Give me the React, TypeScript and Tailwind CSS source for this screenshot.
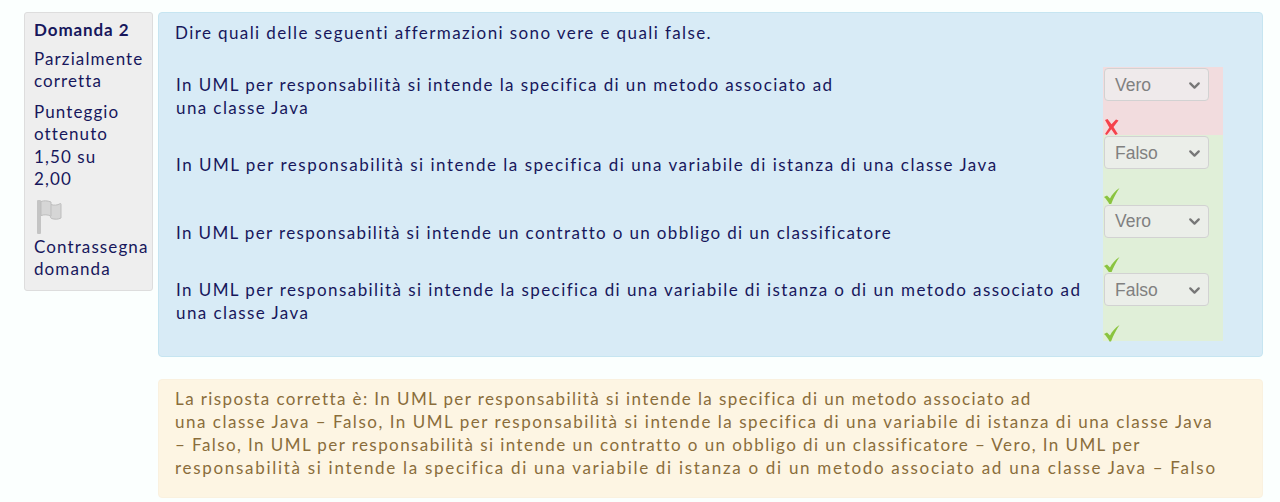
import React from 'react';
import { ChevronDown } from 'lucide-react';

const rows = [
  { text: <>In UML per responsabilità si intende la specifica di un metodo associato ad<br />una classe Java</>, answer: 'Vero', ok: false, spacing: 'tracking-[1.4px]' },
  { text: <>In UML per responsabilità si intende la specifica di una variabile di istanza di una classe Java</>, answer: 'Falso', ok: true, spacing: 'tracking-[1.5px]' },
  { text: <>In UML per responsabilità si intende un contratto o un obbligo di un classificatore</>, answer: 'Vero', ok: true, spacing: 'tracking-[1.36px]' },
  { text: <>In UML per responsabilità si intende la specifica di una variabile di istanza o di un metodo associato ad<br />una classe Java</>, answer: 'Falso', ok: true, spacing: 'tracking-[1.42px]' },
];

const App: React.FC = () => {
  return (
    <div className="h-[502px] overflow-hidden bg-[#fbfffe] pl-6 pr-[17px] pt-3 font-['Lato',sans-serif] text-[17px] leading-[23px] tracking-[1.4px] text-[#17175c]">
      <div className="flex items-start gap-[5px]">
        <div className="h-[279px] w-[129px] shrink-0 rounded-[3px] border border-[#dddddd] bg-[#eeeeee] pl-[9px] pt-[6px] leading-[22.5px] tracking-[1.1px]">
          <h3 className="font-bold tracking-[0.9px]">Domanda 2</h3>
          <p className="mt-[6px]">Parzialmente<br />corretta</p>
          <p className="mt-[8px]">Punteggio<br />ottenuto<br />1,50 su<br />2,00</p>
          <svg className="mt-[9px] block" width="34" height="35" viewBox="0 0 34 35">
            <rect x="3" y="0" width="4" height="34" rx="1" fill="#c4c4c4" />
            <path d="M7 1.500c3-1 6-1 10 .5v2.500c3 1 6 1 9.500-1 .5 0 .5.500.5 1V18c-3 1.500-6 1.500-9.500.5-1-.5-1-1.500-1-2.500-3-1.500-6-1.500-9.500-.5z" fill="#d6d6d6" stroke="#bdbdbd" />
            <path d="M17 4.500V16" stroke="#bdbdbd" fill="none" />
          </svg>
          <p className="mt-[1px]">Contrassegna<br />domanda</p>
        </div>
        <div className="flex-1">
          <div className="h-[345px] rounded-[4px] border border-[#c6e5f1] bg-[#d8ebf6] pl-4 pr-[39px] pt-[8px]">
            <p>Dire quali delle seguenti affermazioni sono vere e quali false.</p>
            <div className="mt-[23px]">
              {rows.map((row, i) => (
                <div key={i} className="flex h-[68.4px]">
                  <div className={`flex-1 self-center pb-[11px] pl-[1px] ${row.spacing}`}>{row.text}</div>
                  <div className={`w-[120px] pl-[1px] pt-[1px] ${row.ok ? 'bg-[#e0efd8]' : 'bg-[#f2dcde]'}`}>
                    <div className="flex h-[33px] w-[105px] items-center justify-between rounded-[4px] border border-[#d2d2d2] bg-[#eeeeee]/80 pl-[10px] pr-[5px] pt-[1px] font-['Liberation_Sans',sans-serif] text-[17.5px] tracking-normal text-[#808080]">
                      {row.answer}
                      <ChevronDown size={17} strokeWidth={3.2} className="text-[#777777]" />
                    </div>
                    {row.ok ? (
                      <svg className="mt-[19px] block" width="16" height="17" viewBox="0 0 16 17">
                        <path d="M0 9 3 7.500l3 3C8 6.500 11 3 15.500 0 12.500 4.500 9.500 10 7 16.500H5.500C4 13.500 2.300 11 0 9z" fill="#8ac43f" />
                      </svg>
                    ) : (
                      <svg className="mt-[18px] block" width="15" height="16" viewBox="0 0 15 16">
                        <path d="M1 1 3.500 0l4 5.200L12 .5l2.500 1-5 6.500 4.300 7-2.500 1-4-5.700-4.500 5.700-1.800-1 4.300-6.500z" fill="#f5424b" />
                      </svg>
                    )}
                  </div>
                </div>
              ))}
            </div>
          </div>
          <div className="mt-[22px] h-[119px] rounded-[4px] border border-[#faf1df] bg-[#fdf5e3] px-4 pt-[7px] text-[#8a6d3b]">
            La risposta corretta è: In UML per responsabilità si intende la specifica di un metodo associato ad<br />
            <span className="tracking-[1.52px]">una classe Java – Falso, In UML per responsabilità si intende la specifica di una variabile di istanza di una classe Java</span><br />
            <span className="tracking-[1.42px]">– Falso, In UML per responsabilità si intende un contratto o un obbligo di un classificatore – Vero, In UML per</span><br />
            <span className="tracking-[1.7px]">responsabilità si intende la specifica di una variabile di istanza o di un metodo associato ad una classe Java – Falso</span>
          </div>
        </div>
      </div>
    </div>
  );
};

export default App;
